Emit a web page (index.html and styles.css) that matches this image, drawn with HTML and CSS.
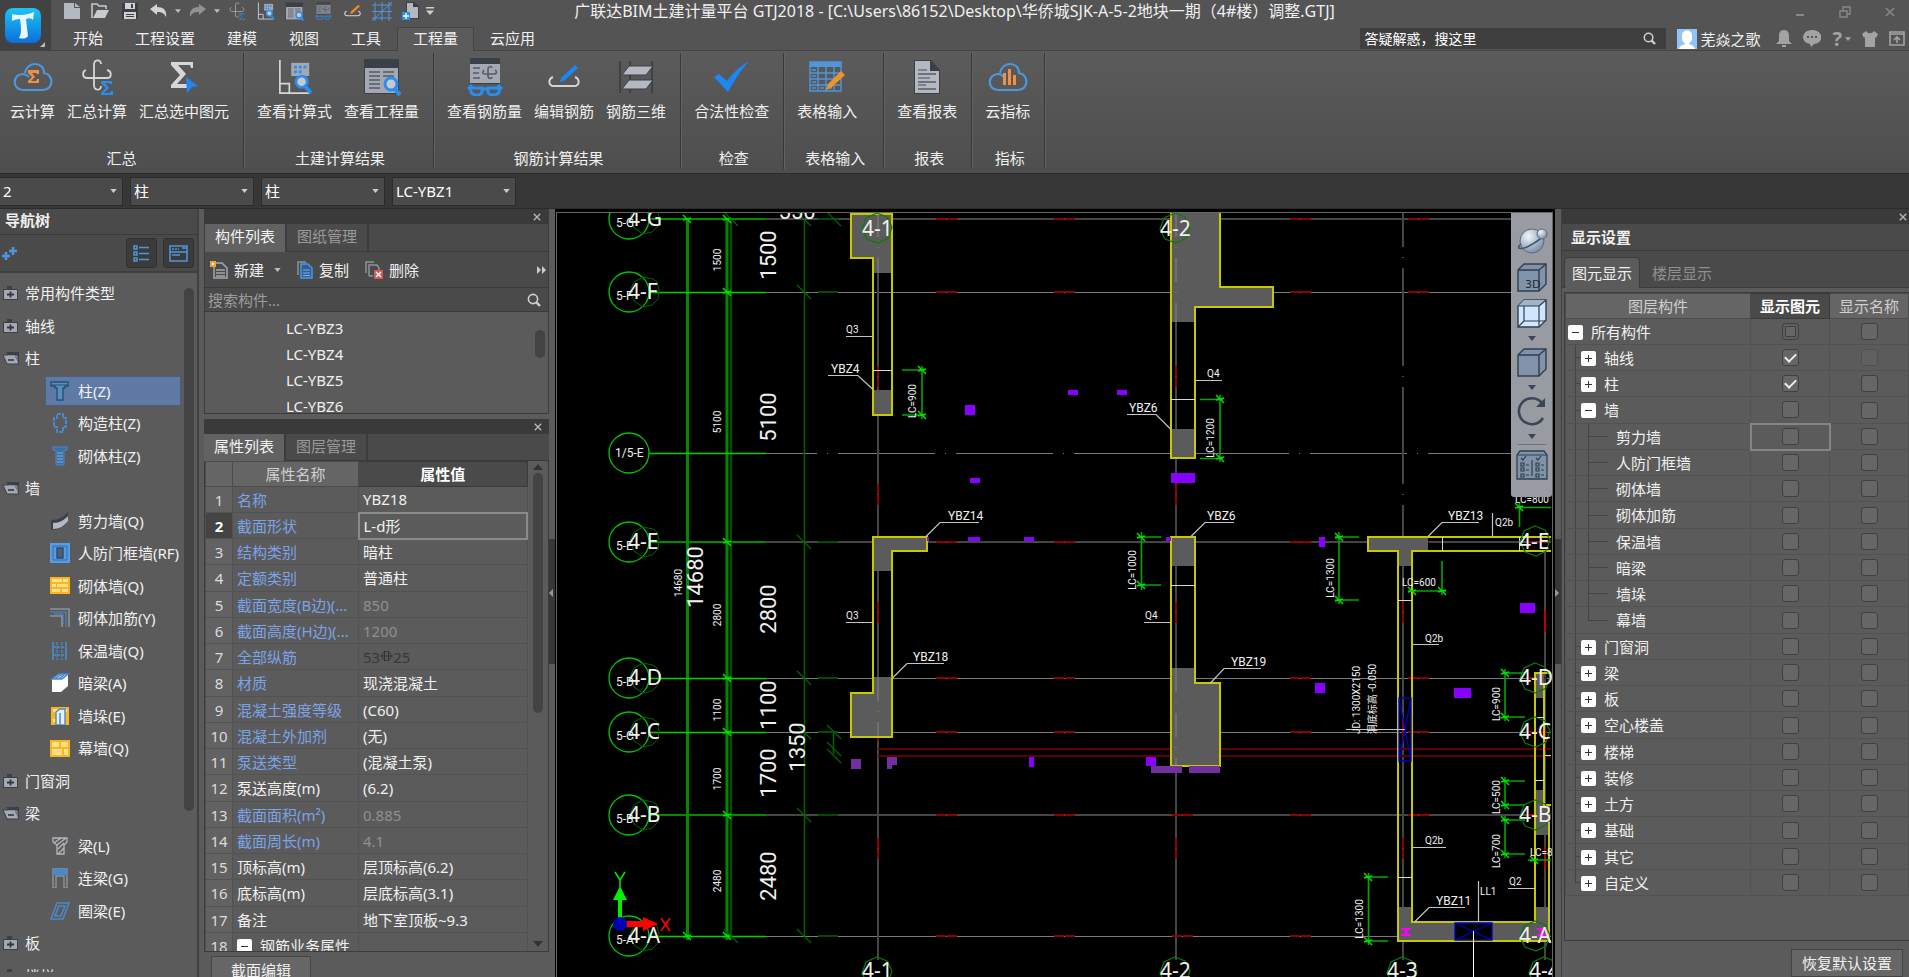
FILE: index.html
```
<!DOCTYPE html>
<html lang="zh-CN">
<head>
<meta charset="UTF-8">
<meta name="viewport" content="width=device-width, initial-scale=1.0">
<title>广联达BIM土建计量平台 GTJ2018</title>
<link rel="stylesheet" href="styles.css">
</head>
<body>

<!-- icon sprite -->
<svg class="sprite">
    <symbol id="i-caret" viewBox="0 0 8 5"><path d="M0 0h8L4 5z" fill="currentColor"/></symbol>
    <symbol id="i-search" viewBox="0 0 14 14"><circle cx="6" cy="6" r="4.6" fill="none" stroke="#d0d0d0" stroke-width="1.6"/><path d="M9 9l4 4" stroke="#d0d0d0" stroke-width="2.4"/></symbol>
    <symbol id="i-x" viewBox="0 0 10 10"><path d="M1 1l8 8M9 1l-8 8" stroke="currentColor" stroke-width="1.6" fill="none"/></symbol>
    <symbol id="i-hook" viewBox="0 0 32 36"><path d="M5 11c-4 1-4 8 1 8h20c5 0 5-7 0-8M20 5c0-5-7-5-7 1v20c0 6 7 6 7 1" fill="none" stroke="#d4d6da" stroke-width="1.8"/><path d="M20 22h11v3h-2l-1-1h-4l4 5-5 5h6l1-2h2v4H20v-2l5-5-5-5z" fill="#2a8df0"/></symbol>
    <symbol id="i-sheetfind" viewBox="0 0 36 38"><path d="M2 1v35h32M2 26h10v10" fill="none" stroke="#d4d6da" stroke-width="1.8"/><path d="M14 4h19v14H14z" fill="#a3a8b2"/><path d="M17 7h3v3h-3zM22 7h3v3h-3zM27 7h3v3h-3zM17 12h3v3h-3zM22 12h3v3h-3z" fill="#2a8df0"/><circle cx="25" cy="24" r="6" fill="#c6c9cf" stroke="#2a8df0" stroke-width="3"/><path d="M29 29l6 7" stroke="#2a8df0" stroke-width="4"/></symbol>
    <symbol id="i-winfind" viewBox="0 0 38 38"><path d="M1 1h35v35H1z" fill="#3b3f47"/><path d="M2 10h33v25H2z" fill="#a3a8b2"/><path d="M6 14h11M6 18h11M6 22h11M6 26h11M6 30h11M20 14h11M20 18h11" stroke="#555b65" stroke-width="1.6"/><circle cx="28" cy="26" r="6" fill="#c6c9cf" stroke="#2a8df0" stroke-width="3"/><path d="M32 31l5 6" stroke="#2a8df0" stroke-width="4"/></symbol>
    <symbol id="i-glasses" viewBox="0 0 36 38"><path d="M3 0h30v26H3z" fill="#3b3f47"/><path d="M3 6h30v19H3z" fill="#a3a8b2"/><path d="M6 10h7M6 15h6M6 20h7" stroke="#555b65" stroke-width="1.6"/><path d="M17 12c-3 4 0 4 2 4h8c4 0 2-4 1-4M25 10c-1-3-4-1-4 1v7c0 3 4 3 4 1" fill="none" stroke="#555b65" stroke-width="1.6"/><path d="M5 27L1 31M31 27l4 4M3 30h12v4c0 4-11 4-11-1zM21 30h12l-1 3c0 5-11 5-11 1zM15 31h6" fill="none" stroke="#2a8df0" stroke-width="3"/></symbol>
    <symbol id="i-pen" viewBox="0 0 32 24"><path d="M5 12c-5 2-5 9 1 9h20c6 0 6-7 1-9" fill="none" stroke="#d4d6da" stroke-width="2"/><path d="M27 0l3 3-14 13-4 1 1-4z" fill="currentColor"/></symbol>
    <symbol id="i-cloud" viewBox="0 0 40 30"><path d="M12 11C14-1 31-1 31 11c10 1 10 17-1 17H10c-11 0-11-16 0-16 3 0 4 1 6 3" fill="none" stroke="#4f97dc" stroke-width="2.2"/></symbol>
    <symbol id="i-folderplus" viewBox="0 0 17 16"><path d="M1 4h4V1h5v3h6v11H1z" fill="#3b3f47"/><path d="M2 5h13v9H2z" fill="#a3a8b2"/><path d="M5 9.500h7M8.500 6.500v6" stroke="#33373e" stroke-width="1.800"/></symbol>
    <symbol id="i-folderopen" viewBox="0 0 18 16"><path d="M4 2h13v12h-4z" fill="#3b3f47"/><path d="M1 5h12l4 9H5z" fill="#a3a8b2" stroke="#3b3f47"/><path d="M6 6h9v6" fill="none" stroke="#a3a8b2"/><path d="M6 10h6" stroke="#33373e" stroke-width="1.600"/></symbol>
</svg>

<header class="head">
    <button class="logo" aria-label="主菜单">
        <svg width="51" height="51" viewBox="0 0 51 51">
            <defs><linearGradient id="lg" x1="0" y1="0" x2="0" y2="1"><stop offset="0" stop-color="#1cc4f6"/><stop offset="1" stop-color="#0b6fdc"/></linearGradient></defs>
            <rect x="5" y="8" width="36" height="35" rx="8" fill="url(#lg)"/>
            <path d="M12 14c7 2 15 1 22-2l-1 8c-2-2-4-2-7-1l2 17c-2 3-6 3-9 2 3-5 2-12 1-19-4 0-6 1-8 2z" fill="#e9f7ff"/>
            <path d="M45 42v5h-5z" fill="#bbb"/>
        </svg>
    </button>
    <div class="topbar">
        <div class="qat">
            <button aria-label="新建"><svg width="18" height="16" viewBox="0 0 18 16"><path d="M1 0h10v5h6v11H1z" fill="#b4b8c0"/><path d="M12 0l5 4h-5z" fill="#b4b8c0"/></svg></button>
            <button aria-label="打开"><svg width="19" height="16" viewBox="0 0 19 16"><path d="M1 15V1h5l2 2h7v3" fill="none" stroke="#c8cbd0" stroke-width="1.500"/><path d="M2 15L6 7h12l-4 8z" fill="#c8cbd0"/></svg></button>
            <button aria-label="保存"><svg width="16" height="16" viewBox="0 0 16 16"><path d="M0 0h16v16H0z" fill="#3b3f47"/><path d="M3 0h10v6H3zM2 9h12v7H2z" fill="#d0d2d6"/><path d="M9 1h2v4H9zM4 11h8v1H4zM4 13h8v1H4z" fill="#3b3f47"/></svg></button>
            <button aria-label="撤销"><svg width="17" height="14" viewBox="0 0 17 14"><path d="M0 5l7-5v3c7 0 10 4 9 10-2-4-4-5-9-5v3z" fill="#d0d2d6"/></svg></button>
            <button class="drop" aria-label="撤销列表"><svg width="6" height="4"><use href="#i-caret"/></svg></button>
            <button aria-label="恢复"><svg width="17" height="14" viewBox="0 0 17 14"><path d="M17 5l-7-5v3C3 3 0 7 1 13c2-4 4-5 9-5v3z" fill="#8f9195"/></svg></button>
            <button class="drop" aria-label="恢复列表"><svg width="6" height="4"><use href="#i-caret"/></svg></button>
            <button aria-label="汇总计算"><svg class="dim" width="16" height="18"><use href="#i-hook"/></svg></button>
            <button aria-label="查看计算式"><svg width="18" height="18"><use href="#i-sheetfind"/></svg></button>
            <button aria-label="查看工程量"><svg width="19" height="19"><use href="#i-winfind"/></svg></button>
            <button aria-label="查看钢筋量"><svg class="dim" width="17" height="18"><use href="#i-glasses"/></svg></button>
            <button class="orange" aria-label="编辑钢筋"><svg width="17" height="16"><use href="#i-pen"/></svg></button>
            <button aria-label="轴网"><svg width="20" height="19" viewBox="0 0 20 19"><path d="M3 0v19M10 0v19M17 0v19M0 3h20M0 9.500h20M0 16h20M0 19L20 0" fill="none" stroke="#4f97dc"/></svg></button>
            <button aria-label="添加"><svg width="17" height="18" viewBox="0 0 17 18"><path d="M4 0h8l5 4v13H4z" fill="#3b3f47"/><path d="M5 1h6v4h5v11H5z" fill="#b4b8c0"/><path d="M0 10h8v8H0z" fill="#2a8df0"/><path d="M4 11v6M1 14h6" stroke="#fff" stroke-width="1.400"/></svg></button>
            <button class="drop" aria-label="自定义"><svg width="8" height="8" viewBox="0 0 8 8"><path d="M0 0h8v1.500H0zM0 3.500h8L4 8z" fill="#d0d0d0"/></svg></button>
        </div>
        <h1>广联达BIM土建计量平台 GTJ2018 - [C:\Users\86152\Desktop\华侨城SJK-A-5-2地块一期（4#楼）调整.GTJ]</h1>
        <div class="winctl">
            <button aria-label="最小化"><svg width="10" height="10"><path d="M1 7h8v2H1z" fill="#888"/></svg></button>
            <button aria-label="还原"><svg width="12" height="12" viewBox="0 0 12 12"><path d="M1 5h7v6H1zM4 5V1h7v7H8" fill="none" stroke="#888" stroke-width="1.400"/></svg></button>
            <button aria-label="关闭"><svg width="10" height="10"><use href="#i-x"/></svg></button>
        </div>
    </div>
    <div class="tabbar">
        <nav>
            <a href="#">开始</a><a href="#">工程设置</a><a href="#">建模</a><a href="#">视图</a><a href="#">工具</a><a href="#" class="on">工程量</a><a href="#">云应用</a>
        </nav>
        <div class="account">
            <label class="ask"><input type="text" value="答疑解惑，搜这里" aria-label="答疑解惑"><svg width="13" height="13"><use href="#i-search"/></svg></label>
            <svg class="avatar" width="20" height="20" viewBox="0 0 20 20"><path d="M0 0h20v20H0z" fill="#8fc4fb"/><path d="M5 6c0-6 10-6 10 0v3c0 5-3 4-3 6 2 1 5 1 6 5H2c1-4 4-4 6-5 0-2-3-1-3-6z" fill="#fff"/></svg>
            <span>芜焱之歌</span>
            <button aria-label="通知"><svg width="16" height="18" viewBox="0 0 16 18"><path d="M8 0c4 0 5 3 5 6v5l3 3H0l3-3V6c0-3 1-6 5-6zM6 15h4v2H6z" fill="#a3a3a3"/></svg></button>
            <button aria-label="消息"><svg width="18" height="17" viewBox="0 0 18 17"><path d="M9 0c12 0 12 14 2 14l-3 3-1-3C-3 13-2 0 9 0z" fill="#a3a3a3"/><path d="M4 6h2v2H4zM8 6h2v2H8zM12 6h2v2h-2z" fill="#555"/></svg></button>
            <button class="help" aria-label="帮助">?<svg width="6" height="4"><use href="#i-caret"/></svg></button>
            <button aria-label="皮肤"><svg width="16" height="16" viewBox="0 0 16 16"><path d="M4 0c2 3 6 3 8 0l4 3-2 4-1-1v10H3V6L2 7 0 3z" fill="#a3a3a3"/></svg></button>
            <button aria-label="收起功能区"><svg width="16" height="15" viewBox="0 0 16 15"><path d="M1 1h14v13H1zM1 3h14M8 12V6M5 9l3-3 3 3" fill="none" stroke="#a3a3a3" stroke-width="1.600"/></svg></button>
        </div>
    </div>
</header>

<section class="ribbon">
    <div class="group first">
        <div class="tools">
            <button><svg width="40" height="36" viewBox="0 0 40 36"><use href="#i-cloud" y="3" width="40" height="30"/><path d="M15 11h11v4h-2l-1-1h-4l3 4-4 4h5l1-2h2v4H15v-2l4-4-4-4z" fill="#f09048"/></svg>云计算</button>
            <button><svg width="32" height="36"><use href="#i-hook"/></svg>汇总计算</button>
            <button><svg width="32" height="36" viewBox="0 0 32 36"><path d="M3 3h22v6h-2l-1-3H10l8 9-9 10h10l2-3h2l-1 7H3v-3l9-10L3 6z" fill="#d4d6da"/><path d="M18 18l12 9-6 1-5 6z" fill="#1e86f5"/></svg>汇总选中图元</button>
        </div>
        <p>汇总</p>
    </div>
    <div class="group">
        <div class="tools">
            <button><svg width="34" height="36"><use href="#i-sheetfind"/></svg>查看计算式</button>
            <button><svg width="38" height="38"><use href="#i-winfind"/></svg>查看工程量</button>
        </div>
        <p>土建计算结果</p>
    </div>
    <div class="group">
        <div class="tools">
            <button><svg width="36" height="38"><use href="#i-glasses"/></svg>查看钢筋量</button>
            <button class="blue"><svg width="32" height="24"><use href="#i-pen"/></svg>编辑钢筋</button>
            <button><svg width="36" height="34" viewBox="0 0 36 34"><path d="M2 1v32M12 1v32M34 1v32" stroke="#3b3f47" stroke-width="1.800"/><path d="M11 6h24l-7 9H4zM11 20h24l-7 9H4z" fill="#b4b8c0" stroke="#3b3f47"/></svg>钢筋三维</button>
        </div>
        <p>钢筋计算结果</p>
    </div>
    <div class="group">
        <div class="tools">
            <button><svg width="36" height="32" viewBox="0 0 36 32"><path d="M0 16l5-3 8 7C20 11 26 5 35 0 27 9 20 20 14 31z" fill="#1e86f5"/></svg>合法性检查</button>
        </div>
        <p>检查</p>
    </div>
    <div class="group wide">
        <div class="tools">
            <button><svg width="36" height="32" viewBox="0 0 36 32"><path d="M1 1h31v5H1z" fill="#4f97dc"/><path d="M1 1h31v29H1zM1 12h31M1 18h31M1 24h31M9 6v24M17 6v24M25 6v24M3 9h4M3 15h4M3 21h4M3 27h4M11 27h4M19 27h4" fill="none" stroke="#4f97dc" stroke-width="1.400"/><path d="M32 10l4 4-14 13-5 2 2-6z" fill="#f0912a"/></svg>表格输入</button>
        </div>
        <p>表格输入</p>
    </div>
    <div class="group">
        <div class="tools">
            <button><svg width="26" height="34" viewBox="0 0 26 34"><path d="M0 0h17l9 10v24H0z" fill="#3b3f47"/><path d="M1 1h15v10h9v22H1z" fill="#b4b8c0"/><path d="M4 10h9M4 18h12M4 25h8" stroke="#6a6f78" stroke-width="1.400"/><path d="M4 14h18M4 22h18M4 29h18" stroke="#555b65" stroke-width="1.400"/></svg>查看报表</button>
        </div>
        <p>报表</p>
    </div>
    <div class="group">
        <div class="tools">
            <button><svg width="40" height="36" viewBox="0 0 40 36"><use href="#i-cloud" y="3" width="40" height="30"/><path d="M15 14h3v12h-3zM20 10h3v16h-3zM25 16h3v10h-3z" fill="#f09048"/></svg>云指标</button>
        </div>
        <p>指标</p>
    </div>
</section>

<div class="combos">
    <label><select aria-label="楼层"><option>2</option></select><svg width="7" height="4"><use href="#i-caret"/></svg></label>
    <label><select aria-label="分类"><option>柱</option></select><svg width="7" height="4"><use href="#i-caret"/></svg></label>
    <label><select aria-label="类型"><option>柱</option></select><svg width="7" height="4"><use href="#i-caret"/></svg></label>
    <label><select aria-label="构件"><option>LC-YBZ1</option></select><svg width="7" height="4"><use href="#i-caret"/></svg></label>
</div>

<main>
    <!-- navigation tree -->
    <aside class="nav">
        <h2>导航树</h2>
        <div class="navtools">
            <svg width="16" height="15" viewBox="0 0 16 15"><path d="M4 6v8M0 10h8M11 1v8M7 5h8" stroke="#4f97dc" stroke-width="2.600"/></svg>
            <button aria-label="列表"><svg width="17" height="17" viewBox="0 0 17 17"><path d="M1 1h3v3H1zM1 7h3v3H1zM1 13h3v3H1zM6 2.500h10M6 8.500h10M6 14.500h10" fill="none" stroke="#4f97dc" stroke-width="1.500"/></svg></button>
            <button aria-label="面板"><svg width="19" height="17" viewBox="0 0 19 17"><path d="M1 1h17v15H1zM1 7h17M3 10h8M3 4h2M6 4h2M9 4h1M13 3h4" fill="none" stroke="#4f97dc" stroke-width="1.500"/></svg></button>
        </div>
        <div class="treebox">
            <ul class="tree">
                <li><svg width="17" height="16"><use href="#i-folderplus"/></svg>常用构件类型</li>
                <li><svg width="17" height="16"><use href="#i-folderplus"/></svg>轴线</li>
                <li><svg width="18" height="16"><use href="#i-folderopen"/></svg>柱</li>
                <li class="sub sel"><a href="#"><svg width="20" height="20" viewBox="0 0 20 20"><path d="M1 1h17v4h-3v2h-2v12H7V7H5V5H1z" fill="#5b8db8" stroke="#21517c" stroke-width="1.400"/><path d="M1 4h17" stroke="#21517c"/></svg>柱(Z)</a></li>
                <li class="sub"><a href="#"><svg width="20" height="20" viewBox="0 0 20 20"><path d="M7 1h6v4h3v9h-3v5H7v-5H4V5h3z" fill="none" stroke="#4a88cc" stroke-width="2" stroke-dasharray="4 1"/></svg>构造柱(Z)</a></li>
                <li class="sub"><a href="#"><svg width="20" height="20" viewBox="0 0 20 20"><path d="M3 1h14v3h-3v15H6V4H3z" fill="#3d6ea6" stroke="#4a88cc"/><path d="M7 7h6M7 10h6M7 13h6M7 16h6" stroke="#7fb2e8"/></svg>砌体柱(Z)</a></li>
                <li><svg width="18" height="16"><use href="#i-folderopen"/></svg>墙</li>
                <li class="sub"><a href="#"><svg width="20" height="20" viewBox="0 0 20 20"><path d="M1 9c8 0 13-3 17-8v9c-4 6-9 9-17 9z" fill="#3b3f47"/><path d="M3 12c7 0 11-3 15-7v5c-4 5-8 8-15 8z" fill="#b4b8c0"/></svg>剪力墙(Q)</a></li>
                <li class="sub"><a href="#"><svg width="20" height="20" viewBox="0 0 20 20"><path d="M0 0h20v20H0z" fill="#5a9ce2"/><path d="M3 3h14v14H3z" fill="none" stroke="#2f6db0"/><path d="M7 5h6v10H7z" fill="#5b5b5b" stroke="#204f86" stroke-width="1.400"/></svg>人防门框墙(RF)</a></li>
                <li class="sub"><a href="#"><svg width="20" height="17" viewBox="0 0 20 17"><path d="M0 0h20v17H0z" fill="#fbb51f"/><path d="M2 2h10v3H2zM13 2h5v3h-5zM2 7h4v3H2zM7 7h11v3H7zM2 12h8v3H2zM12 12h6v3h-6z" fill="#ffe08a"/></svg>砌体墙(Q)</a></li>
                <li class="sub"><a href="#"><svg width="20" height="20" viewBox="0 0 20 20"><path d="M0 1h19v18M0 8h12v11" fill="none" stroke="#8a9499" stroke-width="1.600"/><path d="M0 4h16v15M4 6h9v10" fill="none" stroke="#4a88cc"/></svg>砌体加筋(Y)</a></li>
                <li class="sub"><a href="#"><svg width="20" height="20" viewBox="0 0 20 20"><path d="M3 1v18M16 1v18" stroke="#4a88cc" stroke-width="1.800"/><path d="M7 1v18M12 1v18M3 6h13M3 14h13" stroke="#4a88cc" stroke-width="1.300" stroke-dasharray="3 1"/></svg>保温墙(Q)</a></li>
                <li class="sub"><a href="#"><svg width="20" height="20" viewBox="0 0 20 20"><path d="M2 6l7-5h9v12l-7 6H2z" fill="#fff"/><path d="M2 6l7-5h9l-6 5zM5 6l7-5M9 6l6-5" fill="#bcd8f6" stroke="#4a88cc" stroke-width="1.500"/></svg>暗梁(A)</a></li>
                <li class="sub"><a href="#"><svg width="20" height="18" viewBox="0 0 20 18"><path d="M1 0h18v18H1z" fill="#fbb51f"/><path d="M3 2h4v3H3zM13 2h4v3h-4zM3 12h4v3H3z" fill="#ffe08a"/><path d="M6 5l4-3h5v16H6z" fill="#e6f1fc" stroke="#4a88cc" stroke-width="1.400"/><path d="M10 6v12" stroke="#4a88cc" stroke-width="1.500"/></svg>墙垛(E)</a></li>
                <li class="sub"><a href="#"><svg width="20" height="17" viewBox="0 0 20 17"><path d="M0 0h20v17H0z" fill="#fbb51f"/><path d="M2 2h7v5H2zM11 2h7v5h-7zM2 9h10v6H2zM14 9h4v6h-4z" fill="#ffe08a"/></svg>幕墙(Q)</a></li>
                <li><svg width="17" height="16"><use href="#i-folderplus"/></svg>门窗洞</li>
                <li><svg width="18" height="16"><use href="#i-folderopen"/></svg>梁</li>
                <li class="sub"><a href="#"><svg width="20" height="18" viewBox="0 0 20 18"><path d="M3 1h14v4l-3 3v9H7V8L3 5zM4 6l7-5M7 8l9-7M8 12l6-6M8 17l6-6" fill="none" stroke="#b4b8c0" stroke-width="1.300"/></svg>梁(L)</a></li>
                <li class="sub"><a href="#"><svg width="20" height="20" viewBox="0 0 20 20"><path d="M3 20V1h14v19h-3V8H6v12z" fill="none" stroke="#8a9499" stroke-width="1.400"/><path d="M3 1h14v6H3z" fill="#4a88cc"/></svg>连梁(G)</a></li>
                <li class="sub"><a href="#"><svg width="20" height="18" viewBox="0 0 20 18"><path d="M7 1h12l-6 16H1zM9 4h6l-4 10H5z" fill="none" stroke="#4a88cc" stroke-width="1.600"/></svg>圈梁(E)</a></li>
                <li><svg width="17" height="16"><use href="#i-folderplus"/></svg>板</li>
                <li><svg width="17" height="16"><use href="#i-folderplus"/></svg>楼梯</li>
            </ul>
            <div class="scroll"></div>
        </div>
    </aside>

    <!-- component list + properties -->
    <div class="middle">
        <section class="dock list">
            <div class="strip"><button aria-label="关闭"><svg width="8" height="8"><use href="#i-x"/></svg></button></div>
            <div class="docktabs"><a href="#" class="on">构件列表</a><a href="#">图纸管理</a></div>
            <div class="bar">
                <button><svg width="18" height="18" viewBox="0 0 18 18"><path d="M4 2h8l5 5v10H4z" fill="none" stroke="#a3a8b2" stroke-width="1.500"/><path d="M6 9h9M6 12h9M6 15h9" stroke="#d4d6da"/><path d="M0 0h6v6H0z" fill="#f5a43a"/><path d="M2 2h2v2H2z" fill="#fff"/></svg>新建<svg class="c" width="7" height="4"><use href="#i-caret"/></svg></button>
                <button><svg width="16" height="18" viewBox="0 0 16 18"><path d="M1 14V1h8" fill="none" stroke="#8a9499" stroke-width="1.500"/><path d="M4 3h7l4 4v10H4z" fill="#2f5f94" stroke="#4f97dc" stroke-width="1.500"/><path d="M6 9h7M6 12h7M6 14.500h7" stroke="#7fb2e8"/></svg>复制</button>
                <button><svg width="18" height="18" viewBox="0 0 18 18"><path d="M1 12V1h8M4 15V4h8l2 3v2M4 15h4" fill="none" stroke="#8a9499" stroke-width="1.500"/><path d="M9 9h9v9H9z" fill="#d85555"/><path d="M11 11l5 5M16 11l-5 5" stroke="#fff" stroke-width="1.500"/></svg>删除</button>
                <button class="more" aria-label="更多"><svg width="9" height="8" viewBox="0 0 9 8"><path d="M0 0l4 4-4 4zM5 0l4 4-4 4z" fill="#ccc"/></svg></button>
            </div>
            <label class="find"><input type="text" placeholder="搜索构件..." aria-label="搜索构件"><svg width="14" height="14"><use href="#i-search"/></svg></label>
            <div class="items">
                <ul><li>LC-YBZ3</li><li>LC-YBZ4</li><li>LC-YBZ5</li><li>LC-YBZ6</li></ul>
                <div class="scroll"></div>
            </div>
        </section>

        <section class="dock props">
            <div class="strip"><button aria-label="关闭"><svg width="8" height="8"><use href="#i-x"/></svg></button></div>
            <div class="docktabs"><a href="#" class="on">属性列表</a><a href="#">图层管理</a></div>
            <div class="proparea">
                <div class="tablebox">
                    <table>
                        <thead><tr><th class="n"></th><th class="k">属性名称</th><th class="v">属性值</th></tr></thead>
                        <tbody>
                            <tr><td>1</td><td class="b">名称</td><td>YBZ18</td></tr>
                            <tr class="cur"><td>2</td><td class="b">截面形状</td><td>L-d形</td></tr>
                            <tr><td>3</td><td class="b">结构类别</td><td>暗柱</td></tr>
                            <tr><td>4</td><td class="b">定额类别</td><td>普通柱</td></tr>
                            <tr class="ro"><td>5</td><td class="b">截面宽度(B边)(...</td><td>850</td></tr>
                            <tr class="ro"><td>6</td><td class="b">截面高度(H边)(...</td><td>1200</td></tr>
                            <tr class="dk"><td>7</td><td class="b">全部纵筋</td><td>53<svg width="13" height="13" viewBox="0 0 13 13"><circle cx="6.500" cy="6" r="4.500" fill="none" stroke="#333"/><path d="M4.500 1v10M8.500 1v10M0 6h13" stroke="#333"/></svg>25</td></tr>
                            <tr><td>8</td><td class="b">材质</td><td>现浇混凝土</td></tr>
                            <tr><td>9</td><td class="b">混凝土强度等级</td><td>(C60)</td></tr>
                            <tr><td>10</td><td class="b">混凝土外加剂</td><td>(无)</td></tr>
                            <tr><td>11</td><td class="b">泵送类型</td><td>(混凝土泵)</td></tr>
                            <tr><td>12</td><td>泵送高度(m)</td><td>(6.2)</td></tr>
                            <tr class="ro"><td>13</td><td class="b">截面面积(m²)</td><td>0.885</td></tr>
                            <tr class="ro"><td>14</td><td class="b">截面周长(m)</td><td>4.1</td></tr>
                            <tr><td>15</td><td>顶标高(m)</td><td>层顶标高(6.2)</td></tr>
                            <tr><td>16</td><td>底标高(m)</td><td>层底标高(3.1)</td></tr>
                            <tr><td>17</td><td>备注</td><td>地下室顶板~9.3</td></tr>
                            <tr><td>18</td><td><button class="exp" aria-label="收起"></button>钢筋业务属性</td><td></td></tr>
                        </tbody>
                    </table>
                </div>
                <div class="vbar">
                    <svg width="10" height="6" viewBox="0 0 10 6"><path d="M0 6h10L5 0z" fill="#333"/></svg>
                    <div class="thumb"></div>
                    <svg width="10" height="6" viewBox="0 0 10 6"><path d="M0 0h10L5 6z" fill="#333"/></svg>
                </div>
            </div>
            <div class="foot"><button>截面编辑</button></div>
        </section>
    </div>

    <button class="split" aria-label="收起左侧"><svg width="4" height="8" viewBox="0 0 4 8"><path d="M4 0v8L0 4z" fill="#999"/></svg></button>

    <!-- drawing area -->
    <div class="canvas">
        <div class="view">
        <svg class="cad" width="100%" height="100%">
            <defs>
                <g id="bub"><circle r="20" fill="none" stroke="#00c800" stroke-width="1.300"/><path d="M28-10l-4-3-10-2-9 5-4 9 4 10 9 6 9-2 6-6 1-9z" fill="none" stroke="#006400"/></g>
                <path id="oct" d="M0-15l10 4 5 10-4 11-10 5-11-4-5-10 4-11z" fill="none" stroke="#0a7a0a" stroke-width="1.200"/>
                <path id="tk" d="M-4-4L4 4M-4 1l8-2" stroke="#00e000" stroke-width="1.500"/>
                <path id="tkd" d="M-7-7L7 7" stroke="#006400" stroke-width="1.200"/>
                <path id="zz" d="M-4-3h8l-4 3 4 3h-8" fill="none"/>
            </defs>
            <g transform="translate(-557 -213)">
                <!-- grid axes -->
                <g stroke="#7a7a7a" stroke-width="1">
                    <path d="M766 292.500H1551M766 678.500H1551M766 732.500H1551M766 936.500H1551"/>
                    <path d="M766 453.500H1551" stroke-dasharray="51 10 1 10 97 10 1 10 97 10 1 10 97 10 1 10 97 10 1 10 97 10 1 10 97"/>
                </g>
                <g stroke="#454545" stroke-width="2">
                    <path d="M766 219H1551M766 542H1551M766 815H1551M878 213V960M1176 213V960M1545 550V960"/>
                    <path d="M1403 213v34M1403 257v1M1403 268v98M1403 376v1M1403 387v97M1403 494v1M1403 505V960"/>
                </g>
                <g stroke="#004d00" stroke-width="2"><path d="M818 219h20M818 292h20M818 542h20M818 678h20M818 732h20M818 815h20M818 936h20"/></g>
                <g stroke="#8c0000" stroke-width="2" stroke-dasharray="10 1 10 97">
                    <path d="M936 219H1500M936 292H1500M936 542H1551M936 678H1551M936 732H1551M936 815H1551M936 936H1551"/>
                    <path d="M878 366V900M1176 366V900M1403 602V900"/>
                    <path d="M1545 611V870" stroke="#c00000"/>
                </g>
                <path d="M878 749H1551M878 756H1551" stroke="#5c0000" stroke-width="2"/>

                <!-- dimension chains -->
                <path d="M687.500 219V940M727 219V940" stroke="#008a00" stroke-width="3"/>
                <path d="M731 219V936" stroke="#005000" stroke-width="2"/>
                <path d="M804.500 219V936M833.500 732v22" stroke="#006400" stroke-width="1.500"/>
                <path d="M649 292.500H766M649 453.500H766M649 678.500H766M649 732.500H766M649 936.500H766" stroke="#00d000" stroke-width="1.300"/>
                <path d="M649 219H766M649 542H766M649 815H766" stroke="#008a00" stroke-width="2"/>
                <use href="#tk" x="687" y="219"/><use href="#tk" x="727" y="219"/><use href="#tk" x="727" y="292"/><use href="#tk" x="727" y="542"/><use href="#tk" x="727" y="678"/><use href="#tk" x="727" y="732"/><use href="#tk" x="727" y="815"/><use href="#tk" x="727" y="936"/><use href="#tk" x="687" y="936"/>
                <use href="#tkd" x="731" y="219"/><use href="#tkd" x="731" y="936"/><use href="#tkd" x="804" y="219"/><use href="#tkd" x="834" y="219"/><use href="#tkd" x="804" y="292"/><use href="#tkd" x="804" y="542"/><use href="#tkd" x="804" y="678"/><use href="#tkd" x="804" y="732"/><use href="#tkd" x="804" y="815"/><use href="#tkd" x="804" y="936"/><use href="#tkd" x="834" y="732"/><use href="#tkd" x="834" y="749"/><use href="#tkd" x="834" y="756"/>

                <!-- column and wall fills -->
                <path fill="#5b5b5b" d="M851 213h41v60h-19v-15h-22zM873 390h19v25h-19zM873 537h54v14h-35v20h-19zM873 677h19v60h-41v-44h22zM1171 213h49v74h53v20h-78v15h-24zM1171 429h24v29h-24zM1171 537h24v29h-24zM1171 668h24v15h25v83h-49zM1368 537h60v14h-16v15h-14v-15h-30zM1398 907h14v15h43v19h-57zM1492 922h43v-15h14v34h-57zM1535 673h9v25h-9zM1535 790h9v15h6v30h-15z"/>
                <path stroke="#707070" stroke-width="2" stroke-dasharray="24 10 1 10" d="M878 213v60M1176 213v109M878 677v60M1176 668v98"/>
                <path fill="none" stroke="#c8c800" stroke-width="2" d="M851 214H892V415H873V258H851zM873 537H927V551H892V737H851V693H873zM1171 213V458H1195V307H1273V287H1220V213M1171 537H1195V683H1220V766H1171zM1551 537H1368V551H1398V941H1551M1551 551H1412V922H1535V673H1551M1544 684V805H1551M1549 822V941"/>
                <path fill="none" stroke="#d8d8d8" d="M873 370.500h19M1171 399.500h24M1171 585.500h24M1398 600.500h14M1398 877.500h14M1442.500 537v14M1519.500 537v14M1537 717.500h7M1535 780.500h9M1545 755.500h6"/>

                <!-- openings -->
                <path d="M1455 923h37v17h-37z" fill="#000"/>
                <path d="M1399 698h12v63h-12zL1411 761M1411 698L1399 761M1455 923l37 17M1492 923l-37 17M1455 923h37v17h-37z" fill="none" stroke="#0000c8" stroke-width="1.300"/>
                <path d="M1473.500 931V977" stroke="#fff"/>
                <g stroke="#f0f" stroke-width="2"><use href="#zz" x="1405" y="932"/><use href="#zz" x="1541" y="932"/></g>

                <!-- pads -->
                <path fill="#8800ff" d="M965 405h10v10h-10zM970 478h10v5h-10zM968 537h12v4h-12zM1024 537h10v4h-10zM927 537h2v4h-2zM1068 390h10v5h-10zM1117 390h10v5h-10zM1171 473h24v10h-24zM1319 537h6v10h-6zM1166 537h5v4h-5zM1315 683h10v10h-10zM1454 688h17v10h-17zM1520 603h15v10h-15zM1146 757h10v9h-10zM1029 757h5v10h-5z"/>
                <path fill="#7030a0" d="M851 759h10v10h-10zM887 757h10v8h-5v4h-5zM1151 766h31v7h-31zM1189 766h31v7h-31z"/>

                <!-- local dimensions -->
                <path fill="none" stroke="#00a800" stroke-width="1.600" d="M922 366V419M902 370h23M902 415h23M1220 395V462M1200 399.500h23M1200 458.500h23M1141.500 532V590M1138 537h23M1138 585h23M1339 532V604M1335 537h24M1335 600h24M1408 591h38M1442 561v34M1368.500 873V945M1365 877h23M1365 941h23M1505 669V721M1502 673h23M1502 717h23M1505 777V809M1502 781h23M1502 805h23M1505 816V858M1502 820h23M1502 854h23M1517 507.500h34M1519.500 503V527M1528 860h23"/>
                <use href="#tk" x="922" y="370"/><use href="#tk" x="922" y="415"/><use href="#tk" x="1220" y="399"/><use href="#tk" x="1220" y="458"/><use href="#tk" x="1141" y="537"/><use href="#tk" x="1141" y="585"/><use href="#tk" x="1339" y="537"/><use href="#tk" x="1339" y="600"/><use href="#tk" x="1412" y="591"/><use href="#tk" x="1442" y="591"/><use href="#tk" x="1368" y="877"/><use href="#tk" x="1368" y="941"/><use href="#tk" x="1505" y="673"/><use href="#tk" x="1505" y="717"/><use href="#tk" x="1505" y="781"/><use href="#tk" x="1505" y="805"/><use href="#tk" x="1505" y="820"/><use href="#tk" x="1505" y="854"/><use href="#tk" x="1519" y="507"/><use href="#tk" x="1534" y="860"/>

                <!-- leaders -->
                <path fill="none" stroke="#c4c4c4" stroke-width="1.200" d="M828 375.500h30l15 14M979 522.500h-39l-14 14M846 336.500h27M846 622.500h27M944 663.500h-37l-14 14M1127 414.500h29l15 15M1195 380.500h27M1234 522.500h-29l-14 14M1144 622.500h27M1261 668.500h-37l-14 15M1479 522.500h-37l-14 14M1492.500 513v23M1413 644.500h26M1413 847.500h33M1465 907.500h-36l-14 14M1478.500 881v40M1508 888.500h27M1346 729.500h59"/>

                <!-- labels -->
                <g class="t-mid">
                    <text x="831" y="373">YBZ4</text><text x="948" y="520">YBZ14</text><text x="913" y="661">YBZ18</text><text x="1129" y="412">YBZ6</text><text x="1207" y="520">YBZ6</text><text x="1231" y="666">YBZ19</text><text x="1448" y="520">YBZ13</text><text x="1436" y="905">YBZ11</text>
                </g>
                <g class="t-small">
                    <text x="846" y="333">Q3</text><text x="846" y="619">Q3</text><text x="1207" y="377">Q4</text><text x="1145" y="619">Q4</text><text x="1495" y="526">Q2b</text><text x="1425" y="642">Q2b</text><text x="1425" y="844">Q2b</text><text x="1509" y="885">Q2</text><text x="1480" y="895">LL1</text>
                    <text x="1402" y="586">LC=600</text><text x="1515" y="503">LC=800</text><text x="1530" y="856">LC=8</text>
                </g>
                <g class="t-small rot">
                    <text transform="translate(916 401) rotate(-90)">LC=900</text><text transform="translate(1214 438) rotate(-90)">LC=1200</text><text transform="translate(1136 570) rotate(-90)">LC=1000</text><text transform="translate(1334 578) rotate(-90)">LC=1300</text><text transform="translate(1363 919) rotate(-90)">LC=1300</text><text transform="translate(1500 704) rotate(-90)">LC=900</text><text transform="translate(1500 797) rotate(-90)">LC=500</text><text transform="translate(1500 851) rotate(-90)">LC=700</text>
                    <text transform="translate(1360 700) rotate(-90)">JD: 1300X2150</text><text transform="translate(1376 699) rotate(-90)">洞底标高 -0.050</text>
                    <text transform="translate(721 260) rotate(-90)">1500</text><text transform="translate(721 422) rotate(-90)">5100</text><text transform="translate(721 615) rotate(-90)">2800</text><text transform="translate(721 710) rotate(-90)">1100</text><text transform="translate(721 779) rotate(-90)">1700</text><text transform="translate(721 881) rotate(-90)">2480</text><text transform="translate(682 583) rotate(-90)">14680</text>
                </g>
                <g class="t-big rot">
                    <text transform="translate(776 255) rotate(-90)">1500</text><text transform="translate(776 417) rotate(-90)">5100</text><text transform="translate(776 609) rotate(-90)">2800</text><text transform="translate(776 705) rotate(-90)">1100</text><text transform="translate(776 773) rotate(-90)">1700</text><text transform="translate(776 876) rotate(-90)">2480</text><text transform="translate(703 577) rotate(-90)">14680</text><text transform="translate(805 747) rotate(-90)">1350</text>
                    <text x="797" y="219">550</text>
                </g>

                <!-- axis bubbles -->
                <use href="#bub" x="629" y="219"/><use href="#bub" x="629" y="292"/><circle cx="629" cy="453" r="20" fill="none" stroke="#00c800" stroke-width="1.300"/><use href="#bub" x="629" y="542"/><use href="#bub" x="629" y="678"/><use href="#bub" x="629" y="732"/><use href="#bub" x="629" y="815"/><use href="#bub" x="629" y="936"/>
                <g class="t-mid">
                    <text x="616" y="227">5-G</text><text x="616" y="300">5-F</text><text x="615" y="457">1/5-E</text><text x="616" y="550">5-E</text><text x="616" y="686">5-D</text><text x="616" y="740">5-C</text><text x="616" y="823">5-B</text><text x="616" y="944">5-A</text>
                </g>
                <use href="#oct" x="1535" y="541"/><use href="#oct" x="1535" y="678"/><use href="#oct" x="1535" y="732"/><use href="#oct" x="1535" y="815"/><use href="#oct" x="1535" y="936"/>
                <use href="#oct" x="877" y="228"/><use href="#oct" x="1175" y="228"/><use href="#oct" x="877" y="972"/><use href="#oct" x="1175" y="972"/><use href="#oct" x="1402" y="972"/><use href="#oct" x="1544" y="972"/>
                <g class="t-axis">
                    <text x="628" y="226">4-G</text><text x="628" y="299">4-F</text><text x="628" y="549">4-E</text><text x="628" y="685">4-D</text><text x="628" y="739">4-C</text><text x="628" y="822">4-B</text><text x="628" y="943">4-A</text>
                    <text x="1519" y="549">4-E</text><text x="1519" y="685">4-D</text><text x="1519" y="739">4-C</text><text x="1519" y="822">4-B</text><text x="1519" y="943">4-A</text>
                    <text x="862" y="236">4-1</text><text x="1160" y="236">4-2</text><text x="862" y="978">4-1</text><text x="1160" y="978">4-2</text><text x="1387" y="978">4-3</text><text x="1529" y="978">4-4</text>
                </g>

                <!-- coordinate gizmo -->
                <path d="M618 920v-20h-5l7-14 7 14h-5v20z" fill="#00f000"/>
                <path d="M624 921h19v-4l15 7-15 7v-4h-19z" fill="#f00"/>
                <circle cx="620" cy="924" r="7" fill="#0000b4"/>
                <path d="M615 872l5 8 5-8M620 880v7" stroke="#00e000" stroke-width="1.600" fill="none"/>
                <path d="M661 918l9 13M670 918l-9 13" stroke="#f00" stroke-width="1.600"/>
            </g>
        </svg>
        <div class="viewtools">
            <button aria-label="动态观察"><svg width="32" height="28" viewBox="0 0 32 28"><defs><radialGradient id="sp" cx=".35" cy=".3" r=".7"><stop offset="0" stop-color="#f2f6fb"/><stop offset="1" stop-color="#7f93ab"/></radialGradient></defs><circle cx="16" cy="15" r="12" fill="url(#sp)" stroke="#5a6b80"/><path d="M5 18c-6 5 0 6 8 2s14-9 14-12" fill="none" stroke="#4a5565" stroke-width="1.600"/><circle cx="26" cy="8" r="5" fill="url(#sp)" stroke="#5a6b80"/></svg></button>
            <button aria-label="三维"><svg width="32" height="32" viewBox="0 0 32 32"><path d="M2 9l6-6h22v20l-7 7H2z" fill="#7f93ab" stroke="#333e4c" stroke-width="1.400"/><path d="M2 9h21v21M23 9l7-6" fill="none" stroke="#333e4c" stroke-width="1.400"/><text x="9" y="27">3D</text></svg></button>
            <button aria-label="线框"><svg width="32" height="32" viewBox="0 0 32 32"><path d="M2 9l6-6h22v20l-7 7H2z" fill="#cfe6ff" stroke="#333e4c" stroke-width="1.400"/><path d="M2 9l6-6h22l-7 6z" fill="#a0b4cb"/><path d="M2 9h21v21M23 9l7-6M8 9v15h22M8 24l-6 6" fill="none" stroke="#333e4c" stroke-width="1.200"/></svg><svg class="c" width="8" height="5"><use href="#i-caret"/></svg></button>
            <button aria-label="着色"><svg width="32" height="32" viewBox="0 0 32 32"><path d="M2 9l6-6h22v20l-7 7H2z" fill="#7f93ab" stroke="#333e4c" stroke-width="1.400"/><path d="M2 9h21v21M23 9l7-6" fill="none" stroke="#333e4c" stroke-width="1.400"/></svg><svg class="c" width="8" height="5"><use href="#i-caret"/></svg></button>
            <button aria-label="旋转"><svg width="32" height="32" viewBox="0 0 32 32"><path d="M26 8a13 13 0 1 0 1 15" fill="none" stroke="#3a4656" stroke-width="2.600"/><path d="M29 3v9h-9l4-4z" fill="#3a4656"/></svg><svg class="c" width="8" height="5"><use href="#i-caret"/></svg></button>
            <hr>
            <button aria-label="图元表"><svg width="32" height="32" viewBox="0 0 32 32"><path d="M1 6l3-4h24l3 4v24H1z" fill="#7f93ab" stroke="#333e4c" stroke-width="1.300"/><path d="M1 6h30M16 11v16M5 9l2 2 3-4M20 9l2 2 3-4M5 14h3v3H5zM5 19h3v3H5zM5 25h3v3H5zM20 14h3v3h-3zM20 19h3v3h-3zM20 25h3v3h-3zM10 16h3M10 21h3M10 26h3M25 16h3M25 21h3M25 26h3" fill="none" stroke="#333e4c" stroke-width="1.200"/></svg></button>
        </div>
        </div>
    </div>

    <button class="split" aria-label="收起右侧"><svg width="4" height="8" viewBox="0 0 4 8"><path d="M0 0v8l4-4z" fill="#999"/></svg></button>

    <!-- display settings -->
    <aside class="display">
        <div class="strip"><button aria-label="关闭"><svg width="8" height="8"><use href="#i-x"/></svg></button></div>
        <h2>显示设置</h2>
        <div class="pages"><a href="#" class="on">图元显示</a><a href="#">楼层显示</a></div>
        <div class="layers">
            <table>
                <thead><tr><th>图层构件</th><th class="act">显示图元</th><th class="nm">显示名称</th></tr></thead>
                <tbody>
                    <tr><td class="root"><button class="exp" aria-label="收起"></button>所有构件</td><td><input type="checkbox" class="part" aria-label="所有构件 图元"></td><td><input type="checkbox" aria-label="所有构件 名称"></td></tr>
                    <tr><td class="l1"><button class="exp plus" aria-label="展开"></button>轴线</td><td><input type="checkbox" checked aria-label="轴线 图元"></td><td><input type="checkbox" disabled aria-label="轴线 名称"></td></tr>
                    <tr><td class="l1"><button class="exp plus" aria-label="展开"></button>柱</td><td><input type="checkbox" checked aria-label="柱 图元"></td><td><input type="checkbox" aria-label="柱 名称"></td></tr>
                    <tr><td class="l1"><button class="exp" aria-label="收起"></button>墙</td><td><input type="checkbox" aria-label="墙 图元"></td><td><input type="checkbox" aria-label="墙 名称"></td></tr>
                    <tr><td class="l2">剪力墙</td><td class="focus"><input type="checkbox" aria-label="剪力墙 图元"></td><td><input type="checkbox" aria-label="剪力墙 名称"></td></tr>
                    <tr><td class="l2">人防门框墙</td><td><input type="checkbox" aria-label="人防门框墙 图元"></td><td><input type="checkbox" aria-label="人防门框墙 名称"></td></tr>
                    <tr><td class="l2">砌体墙</td><td><input type="checkbox" aria-label="砌体墙 图元"></td><td><input type="checkbox" aria-label="砌体墙 名称"></td></tr>
                    <tr><td class="l2">砌体加筋</td><td><input type="checkbox" aria-label="砌体加筋 图元"></td><td><input type="checkbox" aria-label="砌体加筋 名称"></td></tr>
                    <tr><td class="l2">保温墙</td><td><input type="checkbox" aria-label="保温墙 图元"></td><td><input type="checkbox" aria-label="保温墙 名称"></td></tr>
                    <tr><td class="l2">暗梁</td><td><input type="checkbox" aria-label="暗梁 图元"></td><td><input type="checkbox" aria-label="暗梁 名称"></td></tr>
                    <tr><td class="l2">墙垛</td><td><input type="checkbox" aria-label="墙垛 图元"></td><td><input type="checkbox" aria-label="墙垛 名称"></td></tr>
                    <tr><td class="l2 end">幕墙</td><td><input type="checkbox" aria-label="幕墙 图元"></td><td><input type="checkbox" aria-label="幕墙 名称"></td></tr>
                    <tr><td class="l1"><button class="exp plus" aria-label="展开"></button>门窗洞</td><td><input type="checkbox" aria-label="门窗洞 图元"></td><td><input type="checkbox" aria-label="门窗洞 名称"></td></tr>
                    <tr><td class="l1"><button class="exp plus" aria-label="展开"></button>梁</td><td><input type="checkbox" aria-label="梁 图元"></td><td><input type="checkbox" aria-label="梁 名称"></td></tr>
                    <tr><td class="l1"><button class="exp plus" aria-label="展开"></button>板</td><td><input type="checkbox" aria-label="板 图元"></td><td><input type="checkbox" aria-label="板 名称"></td></tr>
                    <tr><td class="l1"><button class="exp plus" aria-label="展开"></button>空心楼盖</td><td><input type="checkbox" aria-label="空心楼盖 图元"></td><td><input type="checkbox" aria-label="空心楼盖 名称"></td></tr>
                    <tr><td class="l1"><button class="exp plus" aria-label="展开"></button>楼梯</td><td><input type="checkbox" aria-label="楼梯 图元"></td><td><input type="checkbox" aria-label="楼梯 名称"></td></tr>
                    <tr><td class="l1"><button class="exp plus" aria-label="展开"></button>装修</td><td><input type="checkbox" aria-label="装修 图元"></td><td><input type="checkbox" aria-label="装修 名称"></td></tr>
                    <tr><td class="l1"><button class="exp plus" aria-label="展开"></button>土方</td><td><input type="checkbox" aria-label="土方 图元"></td><td><input type="checkbox" aria-label="土方 名称"></td></tr>
                    <tr><td class="l1"><button class="exp plus" aria-label="展开"></button>基础</td><td><input type="checkbox" aria-label="基础 图元"></td><td><input type="checkbox" aria-label="基础 名称"></td></tr>
                    <tr><td class="l1"><button class="exp plus" aria-label="展开"></button>其它</td><td><input type="checkbox" aria-label="其它 图元"></td><td><input type="checkbox" aria-label="其它 名称"></td></tr>
                    <tr><td class="l1 end"><button class="exp plus" aria-label="展开"></button>自定义</td><td><input type="checkbox" aria-label="自定义 图元"></td><td><input type="checkbox" aria-label="自定义 名称"></td></tr>
                </tbody>
            </table>
        </div>
        <div class="foot right"><button>恢复默认设置</button></div>
    </aside>
</main>

</body>
</html>
```
FILE: styles.css
```
* {
    box-sizing: border-box;
}

body {
    margin: 0;
    height: 100vh;
    overflow: hidden;
    display: flex;
    flex-direction: column;
    background: #3a3a3a;
    color: #f0f0f0;
    font: 15px/20px "Noto Sans", "Noto Sans CJK SC", sans-serif;
}

h1, h2, p, ul {
    margin: 0;
    padding: 0;
    font-size: 15px;
    list-style: none;
}

a {
    color: inherit;
    text-decoration: none;
}

button, input, select {
    margin: 0;
    padding: 0;
    border: 0;
    background: none;
    color: inherit;
    font: inherit;
    border-radius: 0;
}

svg {
    flex: none;
    display: block;
}

.sprite {
    position: absolute;
    width: 0;
    height: 0;
}

/* header */
.head {
    display: grid;
    grid-template-columns: 100%;
    grid-template-rows: 27px 24px;
    background: #545454;
    flex: none;
}

.logo {
    grid-area: 1 / 1 / 3 / 2;
    width: 51px;
    background: #424242;
}

.topbar {
    grid-area: 1 / 1;
    display: grid;
    grid-template-columns: 1fr auto 1fr;
    align-items: center;
    pointer-events: none;
}

.topbar button {
    pointer-events: auto;
}

.topbar h1 {
    font-size: 16px;
    font-weight: normal;
    white-space: nowrap;
    padding-bottom: 5px;
}

.qat {
    display: flex;
    height: 22px;
    align-self: start;
    padding-left: 57px;
    color: #bbb;
}

.qat button {
    width: 29px;
    display: flex;
    align-items: center;
    justify-content: center;
}

.qat .drop {
    width: 10px;
}

.dim {
    opacity: 0.6;
}

.orange {
    color: #f08a24;
}

.winctl {
    display: flex;
    justify-content: flex-end;
    gap: 34px;
    padding: 0 14px 3px 0;
    color: #888;
}

.tabbar {
    grid-area: 2 / 1;
    display: flex;
    justify-content: space-between;
    margin-left: 51px;
    border-bottom: 1px solid #444;
}

.tabbar nav {
    display: flex;
    padding-left: 6px;
}

.tabbar nav a {
    padding: 0 15px;
    border: 1px solid transparent;
    border-bottom: 0;
}

.tabbar nav .on {
    border-color: #444;
    background: #5b5b5b;
    border-radius: 2px 2px 0 0;
    margin-bottom: -1px;
}

.account {
    display: flex;
    align-items: center;
    gap: 11px;
    padding-right: 4px;
}

.account .avatar {
    margin-right: -8px;
}

.account span {
    margin-right: 5px;
}

.ask {
    display: flex;
    align-items: center;
    width: 306px;
    height: 21px;
    padding: 0 10px 0 4px;
    background: #3f3f3f;
}

.ask input {
    flex: 1;
    min-width: 0;
    font-size: 14px;
    color: #fff;
}

.help {
    display: flex;
    align-items: center;
    gap: 3px;
    font-size: 20px;
    font-weight: bold;
    color: #a3a3a3;
}

/* ribbon */
.ribbon {
    flex: none;
    height: 122px;
    display: flex;
    background: linear-gradient(#5b5b5b, #4e4e4e);
    padding-top: 2px;
}

.group {
    display: flex;
    flex-direction: column;
    justify-content: space-between;
    padding: 0 8px 1px 7px;
    height: 116px;
    border-right: 1px solid #383838;
    box-shadow: 1px 0 #626262;
}

.group.first {
    padding-left: 4px;
}

.group.wide {
    padding-right: 18px;
}

.group p {
    text-align: center;
    font-weight: normal;
    padding-left: 4px;
}

.group.wide p {
    padding-left: 14px;
}

.tools {
    display: flex;
}

.wide .tools {
    margin-right: -2px;
}

.tools button {
    display: grid;
    grid-template-rows: 48px 20px;
    place-items: center;
    padding: 0 6px;
    white-space: nowrap;
}

.tools button.blue svg {
    color: #1e86f5;
}

/* combo row */
.combos {
    flex: none;
    height: 36px;
    display: flex;
    align-items: center;
    gap: 7px;
    background: #373737;
    border-top: 1px solid #2b2b2b;
    border-bottom: 1px solid #2b2b2b;
}

.combos label {
    display: flex;
    align-items: center;
    width: 124px;
    height: 29px;
    padding-right: 5px;
    background: #4a4a4a;
    border: 1px solid #2c2c2c;
    color: #ccc;
}

.combos label:first-child {
    width: 123px;
    border-left: 0;
}

.combos select {
    flex: 1;
    min-width: 0;
    appearance: none;
    padding-left: 3px;
    color: #fff;
}

/* workspace */
main {
    flex: 1;
    min-height: 0;
    display: flex;
    background: #5b5b5b;
}

.nav {
    width: 199px;
    flex: none;
    display: flex;
    flex-direction: column;
    border-right: 2px solid #404040;
}

.nav h2, .display h2 {
    flex: none;
    background: #4a4a4a;
    border-bottom: 1px solid #3a3a3a;
}

.nav h2 {
    height: 26px;
    padding: 1px 5px;
}

.navtools {
    flex: none;
    height: 38px;
    display: flex;
    align-items: center;
    gap: 6px;
    padding: 0 3px 0 2px;
    background: #4a4a4a;
    border-bottom: 2px solid #3f3f3f;
}

.navtools > svg {
    margin-right: auto;
}

.navtools button {
    width: 31px;
    height: 30px;
    display: grid;
    place-items: center;
    background: #3b3b3b;
    border: 1px solid #303030;
    border-radius: 3px;
}

.treebox {
    flex: 1;
    min-height: 0;
    margin-bottom: 5px;
    display: flex;
    justify-content: space-between;
    padding: 4px 3px 0 0;
    overflow: hidden;
}

.treebox .scroll {
    flex: none;
    width: 10px;
    height: 523px;
    margin-top: 11px;
}

.scroll, .thumb {
    background: #434343;
    border-radius: 5px;
}

.tree {
    width: 180px;
    flex: none;
}

.tree li {
    height: 32px;
    display: flex;
    align-items: center;
    gap: 6px;
    padding-left: 2px;
    white-space: nowrap;
}

.tree li:nth-child(even) {
    height: 33px;
}

.tree svg[width="18"] {
    margin-right: -1px;
}

.tree .sub {
    padding-left: 46px;
}

.tree a {
    display: flex;
    align-items: center;
    gap: 8px;
    flex: 1;
    height: 28px;
    padding-left: 4px;
}

.tree .sel a {
    background: #607aa6;
    outline: 1px solid #4e5f7d;
}

.middle {
    flex: none;
    width: 345px;
    margin-left: 5px;
    display: flex;
    flex-direction: column;
    gap: 5px;
}

.dock {
    display: flex;
    flex-direction: column;
}

.strip {
    flex: none;
    height: 15px;
    display: flex;
    justify-content: flex-end;
    align-items: center;
    padding-right: 7px;
    background: #3a3a3a;
    color: #bbb;
}

.docktabs {
    flex: none;
    height: 28px;
    display: flex;
    background: #4a4a4a;
    border-bottom: 1px solid #3a3a3a;
}

.docktabs a {
    padding: 2px 10px 0;
    border-right: 2px solid #3c3c3c;
    color: #999;
}

.docktabs .on {
    background: #626262;
    color: #f4f4f4;
    margin-bottom: -1px;
}

.list {
    flex: none;
    height: 205px;
    border: solid #3c3c3c;
    border-width: 0 1px 1px;
}

.bar {
    flex: none;
    height: 36px;
    display: flex;
    align-items: center;
    padding: 0 2px 0 5px;
    gap: 16px;
    background: #4a4a4a;
    border-bottom: 1px solid #3a3a3a;
}

.bar button {
    display: flex;
    align-items: center;
    gap: 6px;
}

.bar .c {
    margin-left: 4px;
    color: #bbb;
}

.bar .more {
    margin-left: auto;
}

.find {
    flex: none;
    height: 24px;
    display: flex;
    align-items: center;
    padding: 0 7px 0 3px;
    background: #4a4a4a;
    border-bottom: 1px solid #3a3a3a;
}

.find input {
    flex: 1;
    min-width: 0;
}

.find input::placeholder {
    color: #9c9c9c;
    opacity: 1;
}

.items {
    flex: 1;
    min-height: 0;
    overflow: hidden;
    display: flex;
    justify-content: space-between;
    padding: 3px 3px 0 81px;
}

.items li {
    height: 26px;
    line-height: 26px;
}

.items .scroll {
    width: 10px;
    height: 28px;
    margin-top: 15px;
}

.props {
    flex: 1;
    min-height: 0;
}

.props .docktabs {
    height: 27px;
}

.proparea {
    flex: 1;
    min-height: 0;
    display: flex;
    border: solid #3c3c3c;
    border-width: 0 1px 1px;
}

.tablebox {
    flex: 1;
    min-width: 0;
    overflow: hidden;
}

table {
    width: 100%;
    border-collapse: collapse;
    table-layout: fixed;
}

th, td {
    height: 26px;
    padding: 0 4px;
    font-weight: normal;
    text-align: left;
    white-space: nowrap;
    border: 1px solid #525252;
    line-height: 20px;
}

tbody tr:nth-child(4n) td {
    height: 27px;
}

th {
    height: 25px;
}

thead th {
    background: #656565;
    color: #d0d0d0;
    text-align: center;
    border-color: #4c4c4c;
}

.props .n {
    width: 27px;
}

.props .k {
    width: 126px;
}

.props .v, .display .act {
    background: #4a4a4a;
    color: #fff;
    font-weight: bold;
    border-color: #3a3a3a;
}

.props td:first-child {
    background: #626262;
    text-align: center;
    padding: 0;
    color: #dcdcdc;
}

.props .b {
    color: #7ba3e8;
}

.props .ro td:last-child {
    color: #909090;
}

.props .dk td:last-child {
    color: #383838;
}

.props td svg {
    display: inline-block;
}

.props .cur td:first-child {
    background: #444;
    font-weight: bold;
    color: #fff;
}

.props .cur td:last-child {
    border: 2px solid #8a8a8a;
}

.props .exp {
    margin-right: 8px;
}

.exp {
    width: 15px;
    height: 15px;
    vertical-align: -2px;
    border-radius: 2px;
    background: linear-gradient(#333, #333) center / 7px 1px no-repeat, #fff;
}

.exp.plus {
    background: linear-gradient(#333, #333) center / 7px 1px no-repeat, linear-gradient(#333, #333) center / 1px 7px no-repeat, #fff;
}

.vbar {
    flex: none;
    width: 20px;
    display: flex;
    flex-direction: column;
    align-items: center;
    padding: 3px 0 4px;
}

.thumb {
    width: 10px;
    height: 240px;
    margin: 3px 0 auto;
}

.foot {
    flex: none;
    height: 25px;
    padding: 4px 7px 0;
    overflow: hidden;
}

.foot button {
    width: 100px;
    height: 28px;
    background: #666;
    border: 1px solid #444;
}

.split {
    flex: none;
    width: 6px;
    display: grid;
    align-content: center;
    background: linear-gradient(#373737, #373737) center 330px / 6px 125px no-repeat, #5b5b5b;
}

/* drawing */
.canvas {
    flex: 1;
    min-width: 0;
    padding: 4px 3px 0 2px;
    background: #000;
}

.view {
    position: relative;
    height: 100%;
    overflow: hidden;
    outline: 1px solid #666;
}

.cad text {
    fill: #f0f0f0;
}

.t-mid {
    font: 12px Roboto, sans-serif;
}

.t-small {
    font: 10px Roboto, "Noto Sans CJK SC", sans-serif;
}

.t-big {
    font: 22px Roboto, sans-serif;
    text-anchor: middle;
}

.rot {
    text-anchor: middle;
}

.t-axis {
    font: 21px "Noto Sans", sans-serif;
}

.viewtools {
    position: absolute;
    top: 0;
    right: 0;
    width: 41px;
    height: 284px;
    padding-top: 13px;
    display: flex;
    flex-direction: column;
    align-items: center;
    background: #989ca2;
    border-radius: 0 0 3px 3px;
    color: #3a4656;
}

.viewtools button {
    margin-bottom: 4px;
}

.viewtools button:first-child {
    margin-bottom: 7px;
}

.viewtools .c {
    margin: 7px auto 1px;
}

.viewtools text {
    font: 11px "DejaVu Sans", sans-serif;
    fill: #222b36;
}

.viewtools hr {
    width: 28px;
    margin: 0 0 4px;
    border: 0;
    border-top: 1px solid #6d7177;
}

/* display settings */
.display {
    flex: none;
    width: 348px;
    display: flex;
    flex-direction: column;
    border-left: 1px solid #404040;
}

.display .strip {
    padding-right: 2px;
}

.display h2 {
    height: 27px;
    padding: 3px 9px;
}

.pages {
    flex: none;
    height: 37px;
    display: flex;
    align-items: flex-end;
    gap: 3px;
    padding-left: 2px;
    background: #4a4a4a;
    border-bottom: 1px solid #3c3c3c;
    color: #909090;
}

.pages a {
    height: 31px;
    padding: 6px 8px 0;
    border: 1px solid transparent;
    border-bottom: 0;
}

.pages .on {
    margin-bottom: -1px;
    padding: 5px 7px 0;
    background: #5b5b5b;
    border-color: #3c3c3c;
    border-radius: 4px 4px 0 0;
    color: #f0f0f0;
}

.layers {
    flex: 1;
    min-height: 0;
    margin: 4px 0 0 2px;
    border: solid #3c3c3c;
    border-width: 1px 0 1px 1px;
    overflow: hidden;
}

.display .act, .display .nm {
    width: 79px;
    padding: 0;
}

.layers td {
    text-align: center;
    padding: 0;
}

.layers td:first-child {
    text-align: left;
    padding-left: 2px;
}

.layers .exp {
    margin-right: 8px;
}

.layers .l1:first-child {
    padding-left: 15px;
    background: linear-gradient(#444, #444) 9px 0 / 1px 100% no-repeat, linear-gradient(#444, #444) 9px 50% / 5px 1px no-repeat;
}

.layers .l1.end:first-child {
    background: linear-gradient(#444, #444) 9px 0 / 1px 50% no-repeat, linear-gradient(#444, #444) 9px 50% / 5px 1px no-repeat;
}

.layers .l2:first-child {
    padding-left: 50px;
    background: linear-gradient(#444, #444) 9px 0 / 1px 100% no-repeat, linear-gradient(#444, #444) 22px 0 / 1px 100% no-repeat, linear-gradient(#444, #444) 22px 50% / 20px 1px no-repeat;
}

.layers .l2.end:first-child {
    background: linear-gradient(#444, #444) 9px 0 / 1px 100% no-repeat, linear-gradient(#444, #444) 22px 0 / 1px 50% no-repeat, linear-gradient(#444, #444) 22px 50% / 20px 1px no-repeat;
}

.layers .focus {
    border: 2px solid #858585;
}

.layers input {
    appearance: none;
    display: block;
    width: 17px;
    height: 17px;
    margin: 0 auto;
    border: 1px solid #404040;
    border-radius: 3px;
    background: #666;
}

.layers input:disabled {
    border-color: #505050;
    background: #606060;
}

.layers .part {
    box-shadow: inset 0 0 0 2px #5f5f5f, inset 0 0 0 3px #404040;
}

.layers input:checked::after {
    content: "";
    display: block;
    width: 5px;
    height: 9px;
    margin: 1px auto;
    border: solid #eee;
    border-width: 0 2px 2px 0;
    transform: rotate(45deg);
}

.foot.right {
    height: 36px;
    padding: 8px 6px 0;
    text-align: right;
}

.foot.right button {
    width: 112px;
}
```
